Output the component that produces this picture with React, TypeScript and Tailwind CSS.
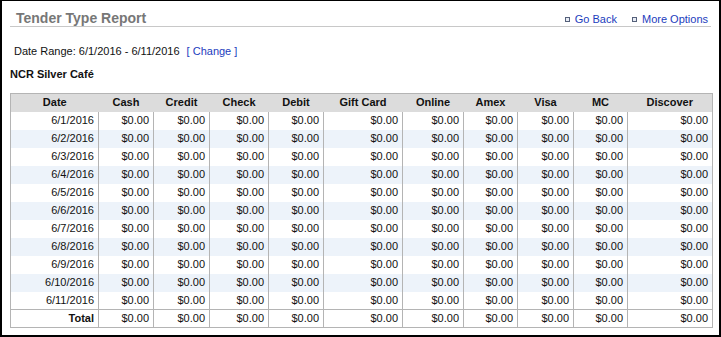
const columns = [
  { label: "Date", w: 88 },
  { label: "Cash", w: 55 },
  { label: "Credit", w: 56 },
  { label: "Check", w: 59 },
  { label: "Debit", w: 55 },
  { label: "Gift Card", w: 79 },
  { label: "Online", w: 61 },
  { label: "Amex", w: 54 },
  { label: "Visa", w: 56 },
  { label: "MC", w: 54 },
  { label: "Discover", w: 85 },
];

const dates = Array.from({ length: 11 }, (_, i) => `6/${i + 1}/2016`);

function Bullet() {
  return <span className="mr-[5px] inline-block h-[5px] w-[5px] border border-[#55607a] bg-[#e8ecf5]" />;
}

export default function App() {
  return (
    <div
      className="h-[337px] w-[721px] overflow-hidden border-x-2 border-t border-b-2 border-black bg-white text-[11px] text-[#111]"
      style={{ fontFamily: '"Liberation Sans", Arial, sans-serif' }}
    >
      <div className="mx-[8px] flex h-[26px] items-end justify-between border-b border-[#c8c8c8]">
        <h1 className="pl-[6px] text-[14px] font-bold leading-[16px] text-[#777]">Tender Type Report</h1>
        <div className="flex items-center gap-[15px] pr-[3px] text-[11px] leading-[13px] text-[#1c3cbd]">
          <a className="flex items-center">
            <Bullet />
            Go Back
          </a>
          <a className="flex items-center">
            <Bullet />
            More Options
          </a>
        </div>
      </div>

      <div className="mt-[17px] pl-[12px] leading-[14px]">
        Date Range: 6/1/2016 - 6/11/2016 <span className="ml-[4px] text-[#1c3cbd]">[ Change ]</span>
      </div>

      <div className="mt-[9px] pl-[8px] font-bold leading-[14px]">NCR Silver Café</div>

      <table className="ml-[8px] mt-[12px] w-[702px] table-fixed border-collapse border border-[#b4b4b4]">
        <colgroup>
          {columns.map((c) => (
            <col key={c.label} style={{ width: c.w }} />
          ))}
        </colgroup>
        <thead>
          <tr className="h-[18px] bg-[#dcdcdc]">
            {columns.map((c) => (
              <th key={c.label} className="p-0 text-center font-bold leading-[17px]">
                {c.label}
              </th>
            ))}
          </tr>
        </thead>
        <tbody>
          {dates.map((d, i) => (
            <tr key={d} className={`h-[18px] ${i % 2 === 1 ? "bg-[#edf3fa]" : "bg-white"}`}>
              <td className="border-x border-[#b4b4b4] px-[4px] py-0 text-right leading-[17px]">{d}</td>
              {columns.slice(1).map((c) => (
                <td key={c.label} className="border-x border-[#b4b4b4] px-[4px] py-0 text-right leading-[17px]">
                  $0.00
                </td>
              ))}
            </tr>
          ))}
          <tr className="h-[18px] border-t border-[#b4b4b4]">
            <td className="border-x border-[#b4b4b4] px-[4px] py-0 text-right font-bold leading-[17px]">Total</td>
            {columns.slice(1).map((c) => (
              <td key={c.label} className="border-x border-[#b4b4b4] px-[4px] py-0 text-right leading-[17px]">
                $0.00
              </td>
            ))}
          </tr>
        </tbody>
      </table>
    </div>
  );
}
